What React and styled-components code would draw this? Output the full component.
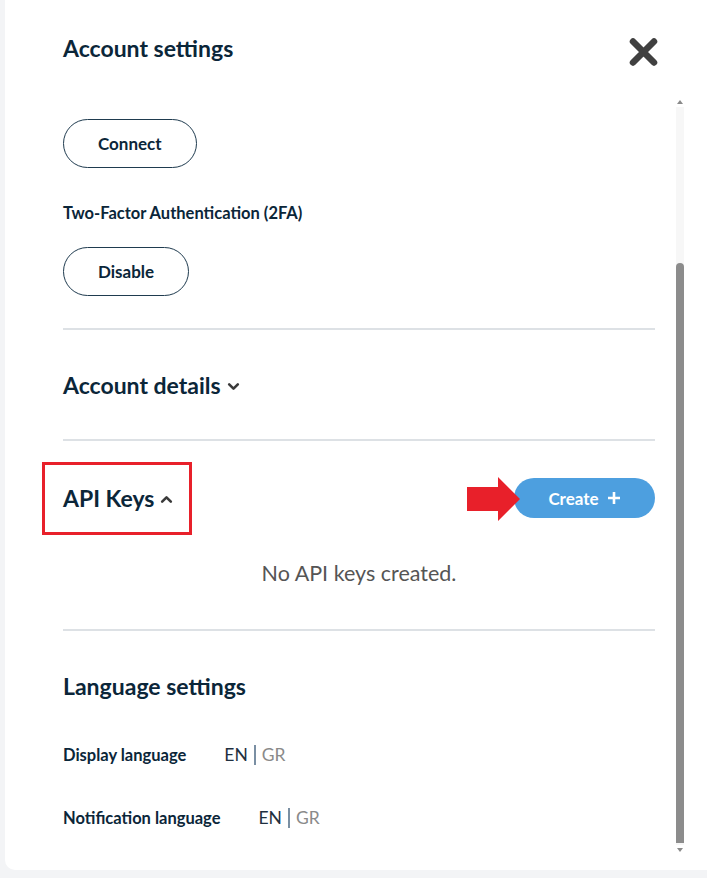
import React from 'react';
import styled, { createGlobalStyle } from 'styled-components';

const GlobalStyle = createGlobalStyle`
    html, body {
        margin: 0;
        padding: 0;
        background: #f3f4f6;
        font-family: Lato, "Open Sans", sans-serif;
    }
`;

const Page = styled.div`
    width: 707px;
    height: 878px;
    display: flex;
    overflow: hidden;
`;

const Modal = styled.div`
    margin-left: 5px;
    flex: 1;
    height: 870px;
    background: #ffffff;
    border-radius: 0 0 0 10px;
    display: flex;
    flex-direction: column;
`;

const Header = styled.div`
    height: 97px;
    display: flex;
    justify-content: space-between;
    align-items: flex-start;
    padding: 34px 48px 0 58px;
    box-sizing: border-box;
`;

const Title = styled.h1`
    margin: 0;
    font-size: 23px;
    line-height: 28px;
    font-weight: 700;
    color: #0b2639;
`;

const Close = styled.button`
    border: none;
    background: none;
    padding: 0;
    margin-top: 3px;
    width: 31px;
    height: 30px;
    cursor: pointer;
    color: #404040;
`;

const Body = styled.div`
    flex: 1;
    display: flex;
    padding-left: 58px;
    gap: 21px;
`;

const Content = styled.div`
    width: 592px;
    display: flex;
    flex-direction: column;
    align-items: flex-start;
`;

const OutlineButton = styled.button`
    height: 49px;
    padding: 0 34px;
    margin-top: ${({ $top }) => $top}px;
    border: 1px solid #1f3b4f;
    border-radius: 25px;
    background: #fff;
    font-family: inherit;
    font-size: 17px;
    font-weight: 700;
    color: #0b2639;
    cursor: pointer;
`;

const Label = styled.div`
    margin-top: ${({ $top }) => $top}px;
    font-size: 16.5px;
    line-height: 20px;
    font-weight: 700;
    color: #0b2639;
`;

const Divider = styled.hr`
    align-self: stretch;
    margin: ${({ $top }) => $top}px 0 0;
    border: none;
    height: 2px;
    background: #dde1e5;
`;

const SectionTitle = styled.h2`
    position: relative;
    margin: ${({ $top }) => $top || 0}px 0 0;
    display: inline-flex;
    align-items: center;
    gap: 6px;
    font-size: 23px;
    line-height: 28px;
    font-weight: 700;
    color: #0b2639;
`;

const Chevron = styled.svg`
    width: 13px;
    height: 13px;
    margin-top: 3px;
    color: #3a3a3a;
`;

const Highlight = styled.span`
    position: absolute;
    left: -21px;
    top: -22px;
    width: 150px;
    height: 73px;
    border: 3px solid #e8202a;
    box-sizing: border-box;
    pointer-events: none;
`;

const ApiRow = styled.div`
    align-self: stretch;
    margin-top: 37px;
    height: 40px;
    display: flex;
    align-items: center;
    justify-content: space-between;
`;

const CreateWrap = styled.div`
    position: relative;
`;

const Arrow = styled.svg`
    position: absolute;
    right: calc(100% - 7px);
    top: -1px;
    width: 54px;
    height: 44px;
`;

const CreateButton = styled.button`
    width: 141px;
    height: 40px;
    border: none;
    border-radius: 20px;
    background: #4d9fdf;
    color: #fff;
    font-family: inherit;
    font-size: 17px;
    font-weight: 700;
    display: flex;
    align-items: center;
    justify-content: center;
    gap: 8px;
    cursor: pointer;
`;

const Empty = styled.p`
    align-self: stretch;
    margin: 43px 0 0;
    text-align: center;
    font-size: 21.5px;
    line-height: 24px;
    color: #555;
`;

const LangRow = styled.div`
    margin-top: ${({ $top }) => $top}px;
    display: flex;
    align-items: center;
    gap: 38px;
`;

const LangSwitch = styled.div`
    display: flex;
    align-items: center;
    font-size: 17.5px;
    line-height: 20px;
    gap: 6px;
`;

const Lang = styled.span`
    color: ${({ $active }) => ($active ? '#1f3040' : '#8a8a8a')};
`;

const Sep = styled.span`
    width: 2px;
    height: 20px;
    background: #7a8fa3;
`;

const Scrollbar = styled.div`
    width: 8px;
    height: 758px;
    display: flex;
    flex-direction: column;
    align-items: center;
`;

const ScrollArrow = styled.div`
    width: 0;
    height: 0;
    border-left: 3px solid transparent;
    border-right: 3px solid transparent;
    ${({ $down }) => ($down ? 'border-top: 4px solid #8a8a8a;' : 'border-bottom: 4px solid #8a8a8a;')}
    margin: 3px 0;
`;

const Track = styled.div`
    flex: 1;
    width: 8px;
    background: #f7f7f7;
    display: flex;
    flex-direction: column;
    justify-content: flex-end;
`;

const Thumb = styled.div`
    height: 580px;
    margin-bottom: 2px;
    background: #8c8c8c;
    border-radius: 4px 4px 0 0;
`;

const ChevronIcon = ({ up }) => (
    <Chevron viewBox="0 0 12 12">
        <path d={up ? 'M2 8 L6 4 L10 8' : 'M2 4 L6 8 L10 4'} fill="none" stroke="currentColor" strokeWidth="2.4" strokeLinecap="round" strokeLinejoin="round" />
    </Chevron>
);

const App = () => {
    return (
        <Page>
            <GlobalStyle />
            <Modal>
                <Header>
                    <Title>Account settings</Title>
                    <Close aria-label="close">
                        <svg viewBox="0 0 31 30" width="31" height="30">
                            <path d="M5 4.5 L26 25.5 M26 4.5 L5 25.5" stroke="currentColor" strokeWidth="6.5" strokeLinecap="round" />
                        </svg>
                    </Close>
                </Header>
                <Body>
                    <Content>
                        <OutlineButton $top={22}>Connect</OutlineButton>
                        <Label $top={35}>Two-Factor Authentication (2FA)</Label>
                        <OutlineButton $top={24}>Disable</OutlineButton>
                        <Divider $top={32} />
                        <SectionTitle $top={41}>
                            Account details
                            <ChevronIcon />
                        </SectionTitle>
                        <Divider $top={40} />
                        <ApiRow>
                            <SectionTitle>
                                API Keys
                                <ChevronIcon up />
                                <Highlight />
                            </SectionTitle>
                            <CreateWrap>
                                <Arrow viewBox="0 0 54 44">
                                    <path d="M0 10 L31 10 L31 0 L53 22 L31 44 L31 34 L0 34 Z" fill="#e8202a" />
                                </Arrow>
                                <CreateButton>
                                    Create
                                    <svg viewBox="0 0 14 14" width="14" height="14">
                                        <path d="M7 1 V13 M1 7 H13" stroke="#fff" strokeWidth="2.6" />
                                    </svg>
                                </CreateButton>
                            </CreateWrap>
                        </ApiRow>
                        <Empty>No API keys created.</Empty>
                        <Divider $top={44} />
                        <SectionTitle $top={41}>Language settings</SectionTitle>
                        <LangRow $top={45}>
                            <Label $top={0}>Display language</Label>
                            <LangSwitch>
                                <Lang $active>EN</Lang>
                                <Sep />
                                <Lang>GR</Lang>
                            </LangSwitch>
                        </LangRow>
                        <LangRow $top={43}>
                            <Label $top={0}>Notification language</Label>
                            <LangSwitch>
                                <Lang $active>EN</Lang>
                                <Sep />
                                <Lang>GR</Lang>
                            </LangSwitch>
                        </LangRow>
                    </Content>
                    <Scrollbar>
                        <ScrollArrow />
                        <Track>
                            <Thumb />
                        </Track>
                        <ScrollArrow $down />
                    </Scrollbar>
                </Body>
            </Modal>
        </Page>
    );
};

export default App;
